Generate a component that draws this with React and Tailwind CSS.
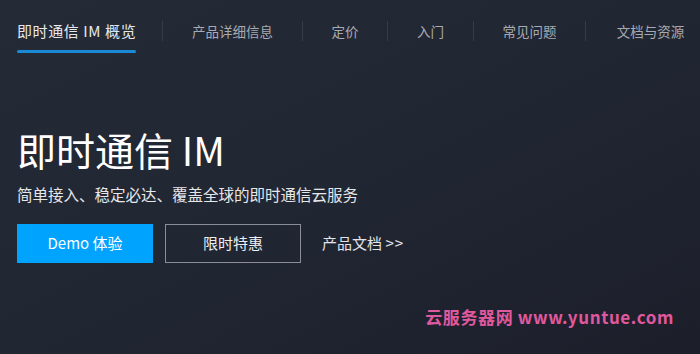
const tabs = [
  { label: "产品详细信息", w: "w-[140px]" },
  { label: "定价", w: "w-[85px]" },
  { label: "入门", w: "w-[86px]" },
  { label: "常见问题", w: "w-[112px]" },
  { label: "文档与资源", w: "w-[130px]" },
];

const App = () => {
  return (
    <div
      className="w-[700px] h-[354px] overflow-hidden bg-gradient-to-br from-[#252a37] via-[#212633] to-[#1c1f2a] text-white"
      style={{ fontFamily: '"Noto Sans CJK SC", "Liberation Sans", sans-serif' }}
    >
      {/* nav */}
      <div className="flex items-start h-[54px] pl-[17px]">
        <div className="flex shrink-0 w-[145px] pt-[20px]">
          <div className="inline-flex flex-col">
            <span className="text-[15px] leading-[22px] tracking-[0.6px] text-[#e8e9ec] whitespace-nowrap">
              即时通信 IM 概览
            </span>
            <div className="mt-[8px] h-[3px] w-full bg-[#1a8ad6] rounded-sm" />
          </div>
        </div>
        {tabs.map((t) => (
          <div key={t.label} className={`flex items-center shrink-0 ${t.w} h-[42px] pt-[20px]`}>
            <div className="w-px h-[20px] bg-[#363b47]" />
            <span className="flex-1 text-center text-[13.5px] leading-[22px] text-[#a7aab2] whitespace-nowrap">
              {t.label}
            </span>
          </div>
        ))}
      </div>

      {/* hero */}
      <div className="pl-[17px] pt-[72px]">
        <h1 className="text-[39px] leading-[46px] text-white font-normal whitespace-nowrap">
          即时通信 IM
        </h1>
        <p className="mt-[11px] text-[15.5px] leading-[22px] text-[#e6e7ea] whitespace-nowrap">
          简单接入、稳定必达、覆盖全球的即时通信云服务
        </p>
        <div className="flex items-center mt-[19px]">
          <button className="w-[136px] h-[39px] bg-[#00a4ff] text-white text-[15px]">
            Demo 体验
          </button>
          <button className="ml-[12px] w-[136px] h-[39px] border border-[#8b8e96] text-[#eceef1] text-[15px]">
            限时特惠
          </button>
          <span className="ml-[21px] text-[15px] text-[#e2e4e8] whitespace-nowrap">
            产品文档 <span className="tracking-[1px]">&gt;&gt;</span>
          </span>
        </div>
      </div>

      {/* watermark */}
      <div className="flex justify-end pr-[26px] pt-[41px]">
        <span
          className="text-[17px] font-bold text-[#e0589d] tracking-[0.6px] whitespace-nowrap"
          style={{ fontFamily: '"Noto Sans CJK SC", "DejaVu Sans", sans-serif' }}
        >
          云服务器网 www.yuntue.com
        </span>
      </div>
    </div>
  );
};

export default App;
